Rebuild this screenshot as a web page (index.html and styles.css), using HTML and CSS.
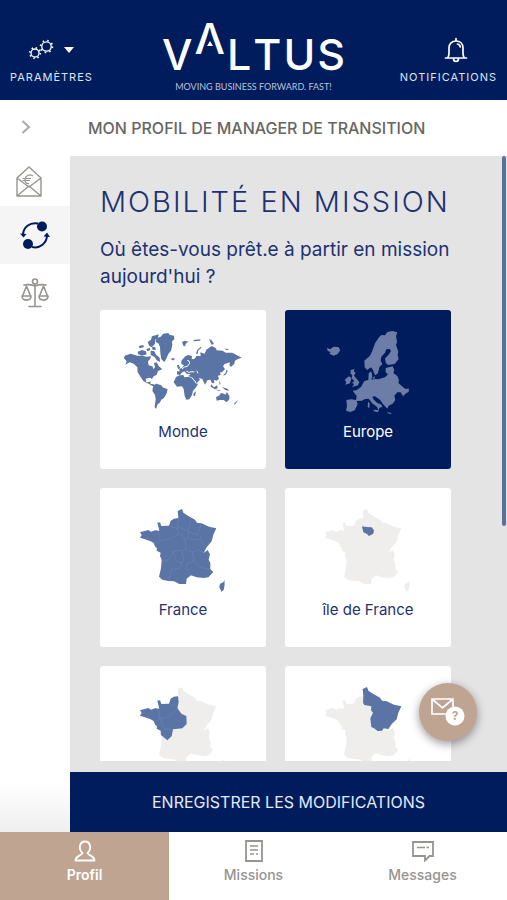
FILE: index.html
```html
<!DOCTYPE html>
<html lang="fr">
<head>
    <meta charset="UTF-8">
    <meta name="viewport" content="width=device-width, initial-scale=1.0">
    <title>Valtus - Mobilité en mission</title>
    <link rel="stylesheet" href="styles.css">
</head>
<body>
    <!-- shared map shapes -->
    <svg class="defs" aria-hidden="true">
        <symbol id="france" viewBox="0 0 498 330">
            <path d="M246 63L233 69L235 90L222 92L212 98L207 113L184 114L180 103L172 104L178 128L165 127L153 131L145 126L120 133L125 141L120 149L135 154L152 160L161 165L166 177L171 180L170 188L182 194L180 204L185 215L183 240L177 266L187 275L205 279L222 280L238 288L258 288L260 272L273 262L290 268L312 270L325 268L340 252L331 244L331 225L326 215L330 199L323 186L311 195L320 178L335 160L340 140L349 121L327 116L305 106L291 104L285 95L265 84L250 74ZM373 275L370 283L360 287L358 297L364 311L371 306L374 290Z"/>
        </symbol>
    </svg>

    <header class="header">
        <button class="header-btn">
            <span class="header-icons">
                <svg width="26" height="22" viewBox="0 0 26 22" fill="none" stroke="#fff">
                    <circle cx="7" cy="14" r="4" stroke-width="1.3"/>
                    <circle cx="7" cy="14" r="5.3" stroke-width="1.6" stroke-dasharray="1.5 2.66"/>
                    <circle cx="18.500" cy="7.500" r="4.700" stroke-width="1.3"/>
                    <circle cx="18.500" cy="7.500" r="6" stroke-width="1.6" stroke-dasharray="1.6 3.11"/>
                </svg>
                <svg width="10" height="6" viewBox="0 0 10 6"><path d="M0 0h10L5 6z" fill="#fff"/></svg>
            </span>
            PARAMÈTRES
        </button>
        <div class="brand">
            <div class="logo" role="img" aria-label="Valtus">
                <span>V</span><span class="logo-a">Λ</span><span>L</span><span>T</span><span>U</span><span>S</span>
            </div>
            <div class="tagline">MOVING BUSINESS FORWARD. FAST!</div>
        </div>
        <button class="header-btn header-btn-end">
            <span class="header-icons">
                <svg width="24" height="26" viewBox="0 0 24 26" fill="none" stroke="#fff" stroke-width="1.7" stroke-linecap="round" stroke-linejoin="round">
                    <path d="M1.500 21H22.500M4 20.500C5.500 18 5 14 5 11C5 6.500 8 4 12 4S19 6.500 19 11C19 14 18.500 18 20 20.500M12 1.500V4M9.500 21.500C9.500 25.500 14.500 25.500 14.500 21.500M13.500 7Q16 7.500 16.200 10"/>
                </svg>
            </span>
            NOTIFICATIONS
        </button>
    </header>

    <main class="main">
        <nav class="sidebar" aria-label="Rubriques">
            <button class="toggle" aria-label="Ouvrir le menu">
                <svg width="10" height="14" viewBox="0 0 10 14" fill="none" stroke="#aaa" stroke-width="2"><path d="M1.500 1L8 7L1.500 13"/></svg>
            </button>
            <a href="#remuneration" class="side-item side-item-first" aria-label="Rémunération">
                <svg width="26" height="31" viewBox="0 0 26 31" fill="none" stroke="#96948f" stroke-width="1.4" stroke-linejoin="round">
                    <path d="M1 12L13 1L25 12V30H1ZM1 12L13 21L25 12M1 30L13 20L25 30"/>
                    <path d="M17 10C13 7.500 9.500 10 9 13S10.500 18 13 17.500M6.500 12.500H15M6.500 14.500H14" stroke-width="1.2"/>
                </svg>
            </a>
            <a href="#mobilite" class="side-item active" aria-label="Mobilité">
                <svg width="30" height="28" viewBox="0 0 30 28" fill="none" stroke="#001c5c" stroke-width="2">
                    <path d="M3 14C3 6 10 1 18 2.500M27 14C27 22 20 28 12 26"/>
                    <circle cx="22" cy="5.500" r="5" fill="#001c5c" stroke="none"/>
                    <circle cx="8" cy="23" r="5" fill="#001c5c" stroke="none"/>
                    <path d="M0 12.500L6.500 13L3.500 16.500ZM23.500 15.500L27 11.500L30 16Z" fill="#001c5c" stroke="none"/>
                </svg>
            </a>
            <a href="#conditions" class="side-item" aria-label="Conditions">
                <svg width="28" height="30" viewBox="0 0 28 30" fill="none" stroke="#96948f" stroke-width="1.6" stroke-linecap="round" stroke-linejoin="round">
                    <circle cx="14" cy="3.500" r="2.500"/>
                    <path d="M14 6V28M8 28.500H20M3 7Q8 6 14 8Q20 6 25 7M5.500 8L1.500 18M5.500 8L9.500 18M22.500 8L18.500 18M22.500 8L26.500 18"/>
                    <path d="M1 18H10C10 23.500 1 23.500 1 18ZM18 18H27C27 23.500 18 23.500 18 18Z"/>
                </svg>
            </a>
        </nav>

        <section class="content">
            <div class="page-title">MON PROFIL DE MANAGER DE TRANSITION</div>
            <div class="panel">
                <div class="scroll">
                    <h1>MOBILITÉ EN MISSION</h1>
                    <p class="question">Où êtes-vous prêt.e à partir en mission aujourd'hui ?</p>
                    <div class="cards">
                        <button class="card">
                            <svg class="map" viewBox="0 0 498 330">
                                <path class="zone" d="M72 145L74 137L92 131L112 137L125 137L140 140L153 139L150 148L144 154L146 166L157 169L161 178L165 171L162 159L170 157L176 168L187 178L174 183L170 194L161 199L156 207L150 203L137 206L139 216L147 217L152 213L151 222L161 223L167 229L157 228L147 222L130 213L120 198L113 187L112 172L101 161L89 157L76 164L80 154Z"/>
                                <path class="zone" d="M170 85L182 80L190 71L205 69L208 74L222 77L223 88L216 94L217 105L213 122L205 132L199 146L193 156L184 148L181 130L180 112L176 101L167 95ZM143 96L153 89L156 79L176 73L174 84L166 89L165 101L156 112L148 108ZM116 108L130 105L132 111L119 115ZM113 125L126 120L138 124L140 133L126 137L114 132ZM139 117L149 114L151 120L142 124ZM152 122L162 123L169 135L179 143L180 156L170 151L164 141L152 135ZM156 112L165 110L168 119L158 120ZM214 145L224 145L222 151L215 150Z"/>
                                <path class="zone" d="M160 226L169 221L184 226L188 232L203 238L200 250L192 264L184 269L179 278L173 283L168 297L164 291L167 268L165 255L157 242Z"/>
                                <path class="zone" d="M228 201L239 196L250 195L253 202L266 200L280 206L287 220L294 221L289 231L279 242L276 255L268 268L259 269L254 258L251 237L246 229L231 230L221 217ZM281 250L288 244L285 258L280 257Z"/>
                                <path class="zone" d="M231 193L231 184L240 184L237 177L246 174L252 166L244 162L244 152L256 139L265 135L276 138L275 148L284 146L289 138L302 138L301 127L314 131L319 119L335 108L347 114L350 121L368 122L377 128L396 128L404 132L425 143L412 148L405 152L403 161L393 171L388 165L390 157L374 162L369 169L375 177L366 187L360 187L362 195L354 197L357 207L349 212L342 209L343 220L336 219L331 209L322 211L315 224L307 207L296 204L300 209L290 219L282 210L278 203L265 198L272 193L260 191L253 184L245 188L240 196ZM231 166L236 164L241 175L234 177ZM246 96L254 92L266 95L258 100L255 109L250 107ZM280 90L302 88L300 92L282 94ZM288 131L292 119L303 110L305 113L295 121L293 132ZM327 88L334 90L342 102L335 104ZM374 116L388 117L380 121Z"/>
                                <path class="zone" d="M348 261L357 257L363 249L372 251L376 254L381 246L388 258L388 268L380 277L371 270L359 270L350 272ZM402 280L408 276L413 270L411 276L404 284ZM333 223L342 232L351 226L353 235L345 238L332 230ZM346 239L361 240L359 243ZM366 231L382 236L388 243L376 240ZM357 211L362 222L359 224ZM372 193L377 188L380 178L383 184L378 193L370 198Z"/>
                                <path class="map-gap" d="M246 177L253 171L262 169L269 160L267 153L262 151M259 183L266 187L276 185L283 186M290 182L294 190M276 204L287 216M158 164L151 156"/>
                            </svg>
                            <span>Monde</span>
                        </button>
                        <button class="card selected" aria-pressed="true">
                            <svg class="map" viewBox="0 0 498 330">
                                <path class="zone" d="M126 113L135 118L146 110L160 111L166 120L158 132L146 137L133 131L137 126L128 123Z"/>
                                <path class="zone" d="M197 180L209 177L206 184L212 188L207 197L216 208L223 216L219 226L201 231L208 222L201 219L208 213L200 205L202 196L197 191ZM184 205L193 199L199 205L195 220L181 224L184 215L179 211Z"/>
                                <path class="zone" d="M322 63L337 67L333 78L336 95L333 105L340 125L338 135L341 147L329 162L309 165L302 158L300 145L310 135L318 123L314 117L304 118L300 128L289 140L287 152L292 162L283 172L279 190L270 196L264 180L258 172L246 180L239 172L238 152L255 137L262 122L270 100L282 82L289 75L300 76L307 66Z"/>
                                <path class="zone" d="M302 174L323 169L328 180L325 189L337 198L342 210L340 219L351 229L360 236L372 236L371 246L363 250L354 259L347 247L337 247L328 257L331 270L323 281L311 287L307 296L300 289L293 281L285 269L270 259L262 260L265 268L276 278L289 284L292 290L283 294L281 303L276 290L263 281L251 266L240 267L231 272L215 273L218 283L209 301L196 306L183 302L186 288L184 270L199 268L213 270L215 258L203 242L214 241L228 231L238 213L250 210L251 190L259 184L262 198L259 209L271 207L280 208L300 202L309 193L302 187ZM265 299L278 300L281 307L267 304ZM249 276L254 279L253 294L248 291ZM307 307L320 309L317 312L308 310ZM261 204L270 199L268 207Z"/>
                            </svg>
                            <span>Europe</span>
                        </button>
                        <button class="card">
                            <svg class="map" viewBox="0 0 498 330">
                                <use href="#france" class="zone"/>
                                <path class="borders" d="M207 113L232 122L239 118L264 130L266 143L255 158L259 184L245 187L220 190L209 210L200 220L183 213M235 90L232 122L236 138L250 143L255 158M173 130L181 158L163 166M181 158L211 153L236 138M264 130L272 98M264 130L292 142L303 108M303 142L300 155L318 176M259 184L277 194L296 185L311 195M220 190L228 220L246 226L240 240L215 244L205 279M245 187L252 216L246 226M277 194L282 218L260 228L257 241L273 262M282 218L302 239L329 243M259 151L277 154L300 155"/>
                            </svg>
                            <span>France</span>
                        </button>
                        <button class="card">
                            <svg class="map" viewBox="0 0 498 330">
                                <use href="#france" class="ground"/>
                                <path class="zone" d="M231 115L245 117L260 118L267 127L265 137L252 144L245 137L235 133Z"/>
                            </svg>
                            <span>île de France</span>
                        </button>
                        <button class="card" aria-label="Nord-Ouest">
                            <svg class="map" viewBox="0 0 498 330">
                                <use href="#france" class="ground"/>
                                <path class="zone" d="M234 91L222 92L212 98L207 113L184 114L180 103L172 104L178 128L165 127L153 131L145 126L120 133L125 141L120 149L135 154L152 160L161 165L166 177L171 180L170 188L182 194L183 207L193 215L202 223L215 211L219 190L247 187L260 174L259 150L244 143L232 126L236 109Z"/>
                                <path class="borders" d="M173 130L181 158L163 166M207 113L225 118L234 125M181 158L209 151L233 127M181 158L193 191L219 190"/>
                            </svg>
                        </button>
                        <button class="card" aria-label="Nord-Est">
                            <svg class="map" viewBox="0 0 498 330">
                                <use href="#france" class="ground"/>
                                <path class="zone" d="M246 63L233 69L235 90L234 110L238 117L259 121L258 133L264 140L256 157L259 183L267 187L278 195L291 194L296 187L310 189L320 174L335 160L340 140L349 121L327 116L305 106L291 104L285 95L265 84L250 74Z"/>
                            </svg>
                        </button>
                    </div>
                </div>
                <div class="thumb"></div>
            </div>
            <button class="save">ENREGISTRER LES MODIFICATIONS</button>
        </section>
    </main>

    <nav class="tabs" aria-label="Navigation principale">
        <a href="#profil" class="tab active">
            <svg width="22" height="22" viewBox="0 0 22 22" fill="none" stroke="currentColor" stroke-width="1.8" stroke-linejoin="round">
                <path d="M8.500 13C4 9 5.500 1.500 11 1.500S18 9 13.500 13C14.500 16 20 15 20.500 20.500H1.500C2 15 7.500 16 8.500 13Z"/>
            </svg>
            Profil
        </a>
        <a href="#missions" class="tab">
            <svg width="22" height="22" viewBox="0 0 22 22" fill="none" stroke="currentColor" stroke-width="1.8">
                <path d="M3 1H19V21H3Z"/>
                <path d="M7 6H15M7 10H15M7 14H11M13 14H15" stroke-width="1.3"/>
            </svg>
            Missions
        </a>
        <a href="#messages" class="tab">
            <svg width="24" height="22" viewBox="0 0 24 22" fill="none" stroke="currentColor" stroke-width="1.8">
                <path d="M2 2H22V16H18.500L14 20.500V16H2Z"/>
                <path d="M6 7.500H14M15.500 7.500H18" stroke-width="1.5"/>
            </svg>
            Messages
        </a>
    </nav>

    <button class="help" aria-label="Aide">
        <svg width="34" height="28" viewBox="0 0 34 28" fill="none">
            <path d="M1 1H22V16H1ZM1 1L11.500 10L22 1" stroke="#fff" stroke-width="1.7"/>
            <circle cx="24" cy="18" r="9.500" fill="#fff"/>
            <text x="24" y="22" class="help-mark">?</text>
        </svg>
    </button>
</body>
</html>
```
FILE: styles.css
```css
:root {
    --navy: #001c5c;
    --text-navy: #1c3272;
    --map: #5b74a6;
    --beige: #c0a492;
    --grey: #e4e4e4;
    --muted: #96948f;
}

* {
    box-sizing: border-box;
}

body {
    margin: 0;
    height: 100vh;
    display: flex;
    flex-direction: column;
    position: relative;
    overflow: hidden;
    background: #fff;
    font-family: Inter, "Open Sans", sans-serif;
}

button {
    border: 0;
    padding: 0;
    background: none;
    font-family: inherit;
    cursor: pointer;
}

a {
    text-decoration: none;
}

.defs {
    position: absolute;
    width: 0;
    height: 0;
}

/* header */
.header {
    display: grid;
    grid-template-columns: 1fr auto 1fr;
    align-items: end;
    height: 100px;
    padding: 0 10px 8px;
    background: var(--navy);
    color: #fff;
}

.header-btn {
    justify-self: start;
    display: flex;
    flex-direction: column;
    align-items: center;
    gap: 6px;
    padding-bottom: 8px;
    color: #dfe5f3;
    font-size: 11px;
    line-height: 14px;
    letter-spacing: 1px;
}

.header-btn-end {
    justify-self: end;
}

.header-icons {
    display: flex;
    align-items: center;
    gap: 10px;
    height: 28px;
}

.header-btn-end .header-icons {
    padding-left: 16px;
}

.brand {
    text-align: center;
}

.logo {
    display: flex;
    justify-content: center;
    gap: 2px;
    margin-bottom: 2px;
    font-size: 43px;
    line-height: 52px;
    font-weight: 500;
}

.logo-a {
    position: relative;
    margin: -16px 0 16px;
}

/* small triangle under the raised A */
.logo-a::after {
    content: "";
    position: absolute;
    left: 50%;
    top: 55%;
    margin-left: -3px;
    border: 3px solid transparent;
    border-top: 0;
    border-bottom: 5px solid #fff;
}

.tagline {
    font-family: Lato, sans-serif;
    font-size: 9px;
    line-height: 10px;
    color: #b9c4de;
}

/* left column */
.main {
    flex: 1;
    min-height: 0;
    display: flex;
}

.sidebar {
    width: 70px;
    display: flex;
    flex-direction: column;
    background: linear-gradient(to top, #efefef, #fff 50px);
}

.toggle {
    height: 48px;
    padding: 8px 18px 0 0;
}

.side-item {
    display: flex;
    align-items: center;
    justify-content: center;
    height: 58px;
}

.side-item-first {
    padding: 8px 12px 0 0;
}

.side-item.active {
    background: #f6f5f6;
}

/* content */
.content {
    flex: 1;
    min-width: 0;
    display: flex;
    flex-direction: column;
}

.page-title {
    padding: 18px 18px;
    font-size: 16px;
    line-height: 20px;
    font-weight: 500;
    color: #666664;
}

.panel {
    flex: 1;
    min-height: 0;
    position: relative;
    padding-bottom: 11px;
    background: var(--grey);
}

.scroll {
    height: 100%;
    overflow-y: auto;
    scrollbar-width: none;
    padding: 28px 56px 24px 30px;
}

.thumb {
    position: absolute;
    top: 0;
    right: 1px;
    width: 4px;
    height: 60%;
    border-radius: 2px;
    background: #5a7099;
}

h1 {
    margin: 0;
    font-size: 29px;
    line-height: 36px;
    font-weight: 300;
    letter-spacing: 2px;
    white-space: nowrap;
    color: var(--text-navy);
}

.question {
    margin: 16px 0 20px;
    font-size: 19px;
    line-height: 27px;
    color: var(--text-navy);
}

.cards {
    display: grid;
    grid-template-columns: 1fr 1fr;
    grid-auto-rows: 1fr;
    gap: 19px;
}

.card {
    display: flex;
    flex-direction: column;
    align-items: center;
    padding-bottom: 25px;
    border-radius: 3px;
    background: #fff;
    color: var(--text-navy);
    font-size: 15px;
    line-height: 24px;
}

.card.selected {
    background: var(--navy);
    color: #fff;
}

.map {
    width: 100%;
}

.zone {
    fill: var(--map);
}

.selected .zone {
    fill: #6c7da7;
}

.ground {
    fill: #efeeed;
}

.borders {
    fill: none;
    stroke: #6a83b2;
    stroke-width: 2;
}

.map-gap {
    fill: none;
    stroke: #fff;
    stroke-width: 3;
}

.save {
    height: 60px;
    background: var(--navy);
    color: #e3e9f8;
    font-size: 16px;
}

/* bottom tabs */
.tabs {
    display: flex;
    height: 68px;
}

.tab {
    flex: 1;
    display: flex;
    flex-direction: column;
    align-items: center;
    gap: 4px;
    padding-top: 8px;
    color: var(--muted);
    font-size: 14px;
    line-height: 18px;
    font-weight: 500;
}

.tab.active {
    background: var(--beige);
    color: #fff;
    font-weight: 600;
}

/* floating help button */
.help {
    position: absolute;
    right: 30px;
    bottom: 159px;
    display: flex;
    align-items: center;
    justify-content: center;
    width: 58px;
    height: 58px;
    border-radius: 50%;
    background: var(--beige);
    box-shadow: 0 3px 10px rgba(0, 0, 0, 0.4);
}

.help-mark {
    fill: var(--beige);
    font-size: 12px;
    font-weight: 700;
    text-anchor: middle;
}
```
